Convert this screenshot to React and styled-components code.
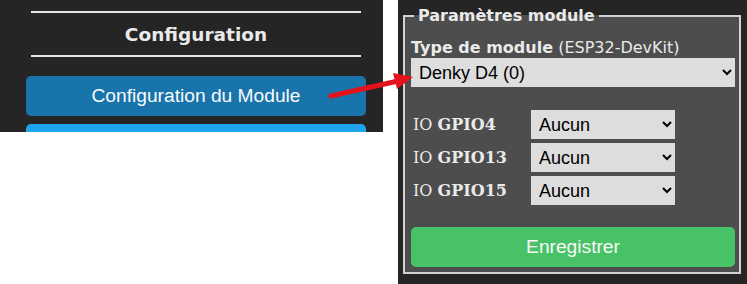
import React from 'react'
import styled, { createGlobalStyle } from 'styled-components'

const GlobalStyle = createGlobalStyle`
  body {
    margin: 0;
    background: #ffffff;
  }
`

const Page = styled.div`
  position: relative;
  display: flex;
  align-items: flex-start;
  gap: 15px;
  width: 747px;
  height: 284px;
  overflow: hidden;
`

const Menu = styled.div`
  box-sizing: border-box;
  width: 383px;
  height: 132px;
  overflow: hidden;
  background: #252525;
  padding: 11px 17px 0 26px;
  display: flex;
  flex-direction: column;

  & > * {
    flex-shrink: 0;
  }
`

const Rule = styled.div`
  height: 2px;
  margin: 0 5px;
  background: #e6e6e6;
`

const Heading = styled.h3`
  margin: 0;
  height: 42px;
  display: flex;
  align-items: center;
  justify-content: center;
  font-family: 'DejaVu Sans', Verdana, sans-serif;
  font-weight: bold;
  font-size: 18.5px;
  color: #eaeaea;
`

const MenuButton = styled.button`
  display: block;
  width: 100%;
  height: 40px;
  margin-top: ${p => p.$first ? '19px' : '8px'};
  border: 0;
  border-radius: 5px;
  background: ${p => p.$active ? '#1874ab' : '#1fa3ec'};
  color: #fafafa;
  font-family: 'Liberation Sans', Arial, sans-serif;
  font-size: 19.2px;
`

const Panel = styled.div`
  box-sizing: border-box;
  width: 349px;
  height: 284px;
  background: #252525;
  padding: 6px 6px 0 5px;
`

const Fieldset = styled.fieldset`
  box-sizing: border-box;
  margin: 0;
  height: 268px;
  border: 2px solid #d2d2d2;
  background: #4d4d4d;
  padding: 0 4px 0 6px;
`

const Legend = styled.legend`
  margin-left: 3px;
  padding: 0 4px;
  font-family: 'DejaVu Sans', Verdana, sans-serif;
  font-weight: bold;
  font-size: 16px;
  color: #eaeaea;
  line-height: 19px;
`

const TypeLabel = styled.div`
  margin-top: 13px;
  font-family: 'DejaVu Sans', Verdana, sans-serif;
  font-size: 16px;
  line-height: 20px;
  color: #eaeaea;

  b {
    font-weight: bold;
  }
`

const Select = styled.select`
  box-sizing: border-box;
  display: block;
  width: ${p => p.$width || '100%'};
  height: 29px;
  border: 0;
  border-radius: 0;
  background: #dddddd;
  color: #000;
  padding: 0 4px;
  font-family: 'Liberation Sans', Arial, sans-serif;
  font-size: 18px;
`

const GpioGrid = styled.div`
  margin-top: 23px;
  display: grid;
  grid-template-columns: 120px 144px;
  row-gap: 4px;
  align-items: center;
`

const GpioLabel = styled.div`
  padding-left: 2px;
  font-family: 'DejaVu Serif', 'Liberation Serif', serif;
  font-size: 16px;
  color: #eaeaea;

  b {
    font-weight: bold;
  }
`

const SaveButton = styled.button`
  display: block;
  width: 100%;
  height: 40px;
  margin-top: 22px;
  border: 0;
  border-radius: 5px;
  background: #47c266;
  color: #fafafa;
  font-family: 'Liberation Sans', Arial, sans-serif;
  font-size: 19.2px;
`

const Arrow = styled.svg`
  position: absolute;
  left: 0;
  top: 0;
  pointer-events: none;
`

const gpios = ['GPIO4', 'GPIO13', 'GPIO15']

export default function App() {
  return (
    <>
      <GlobalStyle />
      <Page>
        <Menu>
          <Rule />
          <Heading>Configuration</Heading>
          <Rule />
          <MenuButton $first $active>Configuration du Module</MenuButton>
          {/* next menu entry, cut off by the crop: only its top edge shows */}
          <MenuButton aria-label="Configuration WiFi" />
        </Menu>
        <Panel>
          <Fieldset>
            <Legend>Paramètres module</Legend>
            <TypeLabel>
              <b>Type de module</b> (ESP32-DevKit)
            </TypeLabel>
            <Select defaultValue="0">
              <option value="0">Denky D4 (0)</option>
            </Select>
            <GpioGrid>
              {gpios.map(g => (
                <React.Fragment key={g}>
                  <GpioLabel>
                    IO <b>{g}</b>
                  </GpioLabel>
                  <Select $width="144px" defaultValue="0">
                    <option value="0">Aucun</option>
                  </Select>
                </React.Fragment>
              ))}
            </GpioGrid>
            <SaveButton>Enregistrer</SaveButton>
          </Fieldset>
        </Panel>
        <Arrow width="747" height="284" viewBox="0 0 747 284">
          <line x1="331" y1="96" x2="398" y2="81" stroke="#e3121b" strokeWidth="5" strokeLinecap="round" />
          <polygon points="413,77 393,73 397,89" fill="#e3121b" />
        </Arrow>
      </Page>
    </>
  )
}
